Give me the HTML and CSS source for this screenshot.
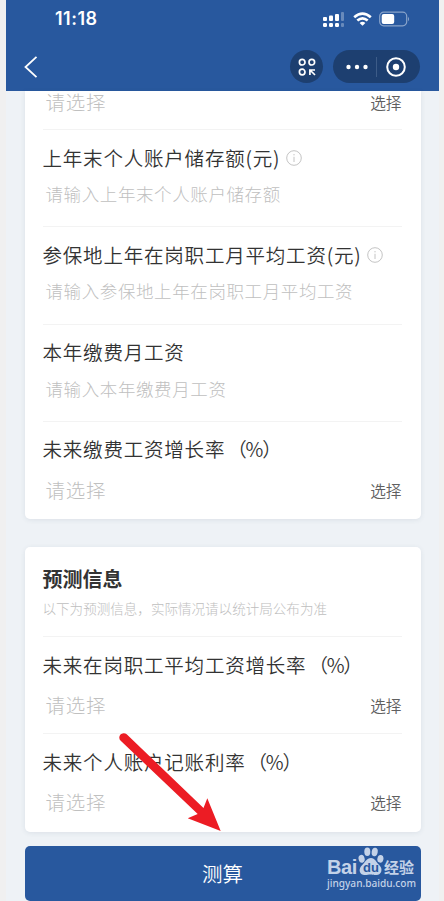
FILE: index.html
```html
<!DOCTYPE html>
<html lang="zh-CN">
<head>
    <meta charset="UTF-8">
    <meta name="viewport" content="width=device-width, initial-scale=1.0">
    <title>养老金测算</title>
    <link rel="stylesheet" href="styles.css">
</head>
<body>
    <div class="phone">
        <header class="top">
            <div class="status-bar">
                <span class="time">11:18</span>
                <div class="status-icons">
                    <svg class="signal" width="22" height="16" viewBox="0 0 22 16" fill="#fff">
                        <rect x="0" y="6" width="4" height="4" rx="1"/>
                        <rect x="6" y="4.500" width="4" height="5.500" rx="1"/>
                        <rect x="12" y="3" width="4" height="7" rx="1"/>
                        <rect x="18" y="1" width="3" height="9" rx="1" opacity=".3"/>
                        <rect x="0" y="12" width="4" height="4" rx="1.200"/>
                        <rect x="6" y="12" width="4" height="4" rx="1.200"/>
                        <rect x="12" y="12" width="4" height="4" rx="1.200"/>
                        <rect x="18" y="12" width="3" height="4" rx="1" opacity=".3"/>
                    </svg>
                    <svg class="wifi" width="19" height="14" viewBox="0 0 19 14" fill="none" stroke="#fff" stroke-width="2.700">
                        <path d="M1.200 5.200Q9.500-2 17.800 5.200"/>
                        <path d="M4.300 8.500Q9.500 4.200 14.700 8.500"/>
                        <path d="M9.500 13.800L6.600 10.900Q9.500 8.700 12.400 10.900Z" fill="#fff" stroke="none"/>
                    </svg>
                    <svg class="battery" width="32" height="16" viewBox="0 0 32 16">
                        <rect x=".7" y="1.200" width="27" height="13.600" rx="4" fill="none" stroke="#fff" stroke-opacity=".45" stroke-width="1.200"/>
                        <rect x="2.700" y="3" width="12.500" height="10" rx="2" fill="#fff"/>
                        <path d="M29 5.700Q31.200 8 29 10.300Z" fill="#fff" opacity=".45"/>
                    </svg>
                </div>
            </div>
            <div class="nav-bar">
                <svg class="back" width="14" height="22" viewBox="0 0 14 22" fill="none" stroke="#fff" stroke-width="1.800">
                    <path d="M12.500 .8L1.500 11L12.500 21.200"/>
                </svg>
                <div class="nav-actions">
                    <div class="circle-btn">
                        <svg width="18" height="18" viewBox="0 0 18 18" fill="none" stroke="#fff" stroke-width="1.700">
                            <circle cx="4.200" cy="4.200" r="2.800"/>
                            <circle cx="13.800" cy="4.200" r="2.800"/>
                            <circle cx="4.200" cy="14" r="2.800"/>
                            <path d="M11.900 17V12H17M12 12L17 17"/>
                        </svg>
                    </div>
                    <div class="capsule">
                        <svg width="22" height="6" viewBox="0 0 22 6" fill="#fff">
                            <circle cx="2.500" cy="3" r="2.200"/>
                            <circle cx="11" cy="3" r="2.200"/>
                            <circle cx="19.500" cy="3" r="2.200"/>
                        </svg>
                        <span class="split"></span>
                        <svg width="20" height="20" viewBox="0 0 20 20">
                            <circle cx="10" cy="10" r="8.800" fill="none" stroke="#fff" stroke-width="2"/>
                            <circle cx="10" cy="10" r="3.200" fill="#fff"/>
                        </svg>
                    </div>
                </div>
            </div>
        </header>

        <main class="content">
            <section class="card card-first">
                <div class="row row-cut">
                    <div class="field select"><span>请选择</span><span class="pick">选择</span></div>
                </div>
                <div class="row">
                    <div class="label">上年末个人账户储存额(元)
                        <svg class="info" width="16" height="16" viewBox="0 0 16 16"><circle cx="8" cy="8" r="7.300"/><path d="M8 6.800V12M8 4V5.400"/></svg>
                    </div>
                    <div class="field">请输入上年末个人账户储存额</div>
                </div>
                <div class="row">
                    <div class="label">参保地上年在岗职工月平均工资(元)
                        <svg class="info" width="16" height="16" viewBox="0 0 16 16"><circle cx="8" cy="8" r="7.300"/><path d="M8 6.800V12M8 4V5.400"/></svg>
                    </div>
                    <div class="field">请输入参保地上年在岗职工月平均工资</div>
                </div>
                <div class="row">
                    <div class="label">本年缴费月工资</div>
                    <div class="field">请输入本年缴费月工资</div>
                </div>
                <div class="row">
                    <div class="label">未来缴费工资增长率<span class="unit">（%）</span></div>
                    <div class="field select"><span>请选择</span><span class="pick">选择</span></div>
                </div>
            </section>

            <section class="card card-forecast">
                <div class="card-head">
                    <h2>预测信息</h2>
                    <p>以下为预测信息，实际情况请以统计局公布为准</p>
                </div>
                <div class="row">
                    <div class="label">未来在岗职工平均工资增长率<span class="unit">（%）</span></div>
                    <div class="field select"><span>请选择</span><span class="pick">选择</span></div>
                </div>
                <div class="row">
                    <div class="label">未来个人账户记账利率<span class="unit">（%）</span></div>
                    <div class="field select"><span>请选择</span><span class="pick">选择</span></div>
                </div>
            </section>

            <button class="submit" type="button">测算</button>
        </main>

        <svg class="arrow" width="112" height="100" viewBox="0 0 112 100">
            <path d="M8.700 7.800A4.400 4.400 0 0 1 14.700 1.300L91.500 75L95.300 65.300L108.700 98L75.700 85.300L85.700 81Z" fill="#ec1c24"/>
        </svg>

        <div class="watermark">
            <div class="wm-logo">
                <span class="wm-bai">Bai</span>
                <span class="wm-paw">
                    <svg width="26" height="29" viewBox="0 0 26 29" fill="currentColor">
                        <ellipse cx="3.600" cy="11.800" rx="3" ry="4" transform="rotate(-15 3.600 11.800)"/>
                        <ellipse cx="9.300" cy="4.800" rx="3" ry="4.200"/>
                        <ellipse cx="16.700" cy="5" rx="3" ry="4.200" transform="rotate(10 16.700 5)"/>
                        <ellipse cx="22.400" cy="11.800" rx="3" ry="3.900" transform="rotate(12 22.400 11.800)"/>
                        <path d="M13 11C17 11 18 15 21 17.800C25.500 22 23.500 28 18.500 28C15 28 15 27.500 12.500 27.500S8 28.500 5 27.800C1 26.500 .5 21.500 4 18.200C7.500 15 8.500 11 13 11Z"/>
                    </svg>
                    <b>du</b>
                </span>
                <span class="wm-cn">经验</span>
            </div>
            <div class="wm-url">jingyan.baidu.com</div>
        </div>
    </div>
</body>
</html>
```
FILE: styles.css
```css
* {
    box-sizing: border-box;
}

body {
    margin: 0;
    background-color: #f0f0f0;
    font-family: "Noto Sans CJK SC", sans-serif;
    font-weight: 350;
    color: #333;
    overflow: hidden;
}

.phone {
    position: relative;
    width: 433px;
    height: 901px;
    margin-left: 6px;
    background-color: #eef2f6;
    overflow: hidden;
}

svg {
    display: block;
    flex: none;
}

/* header */
.top {
    height: 91px;
    background-color: #28589e;
    color: #fff;
}

.status-bar {
    display: flex;
    justify-content: space-between;
    height: 38px;
    padding: 0 28px 0 49px;
}

.time {
    font: 600 18px/38px Inter, sans-serif;
    letter-spacing: 0.5px;
}

.status-icons {
    display: flex;
    align-items: center;
}

.wifi {
    margin: 0 7px 0 8px;
}

.nav-bar {
    display: flex;
    justify-content: space-between;
    align-items: center;
    height: 57px;
    padding: 0 19px 0 18px;
}

.nav-actions {
    display: flex;
    gap: 10px;
}

.circle-btn {
    display: flex;
    align-items: center;
    justify-content: center;
    width: 33px;
    height: 33px;
    border-radius: 50%;
    background-color: #1d3f70;
}

.capsule {
    display: flex;
    align-items: center;
    width: 87px;
    height: 33px;
    padding-left: 13px;
    border-radius: 17px;
    background-color: #1d3f70;
}

.split {
    width: 1px;
    height: 20px;
    margin: 0 9px 0 8px;
    background-color: #3d5c88;
}

/* cards */
.content {
    padding: 0 18.5px;
}

.card {
    padding: 0 19px 0 18px;
    border-radius: 5px;
    background-color: #fff;
    box-shadow: 0 1px 5px rgba(60, 80, 110, 0.1);
}

.card-first {
    height: 428px;
    border-radius: 0 0 5px 5px;
}

.card-forecast {
    height: 285px;
    margin-top: 28px;
}

.card-head {
    height: 89px;
    padding-top: 18px;
}

.card-head h2 {
    margin: 0;
    font-size: 20px;
    line-height: 28px;
    font-weight: 700;
}

.card-head p {
    margin: 5px 0 0;
    color: #bebebe;
    font-size: 13.55px;
    font-weight: 300;
    line-height: 20px;
    white-space: nowrap;
}

.row {
    height: 97.25px;
    padding-top: 13px;
    border-top: 1px solid #f3f3f3;
}

.row-cut {
    display: flex;
    align-items: flex-end;
    height: 38px;
    padding: 0 0 13px;
    border: none;
}

.row-cut .select {
    flex: 1;
}

.label {
    display: flex;
    align-items: center;
    height: 28px;
    font-size: 19.5px;
    letter-spacing: 0.8px;
    white-space: nowrap;
}

/* full-width brackets set a little tighter around the percent sign */
.unit {
    margin-left: 2px;
    letter-spacing: -1.2px;
}

.info {
    margin: 1px 0 0 5.5px;
    fill: none;
    stroke: #c4c4c4;
    stroke-width: 1;
}

.field {
    height: 28px;
    margin-top: 9px;
    padding-left: 3px;
    color: #c0c0c0;
    font-size: 17.5px;
    font-weight: 300;
    line-height: 28px;
    letter-spacing: 0.6px;
    white-space: nowrap;
}

.select {
    display: flex;
    justify-content: space-between;
    margin-top: 13px;
    font-size: 19.5px;
    letter-spacing: 0.75px;
}

.pick {
    color: #606060;
    font-size: 15.7px;
    font-weight: 350;
    line-height: 30px;
    letter-spacing: 0;
}

.submit {
    display: block;
    width: 100%;
    height: 55px;
    margin-top: 14px;
    padding: 0;
    border: none;
    border-radius: 5px;
    background-color: #28589e;
    color: #fff;
    font: 350 20.5px/55px "Noto Sans CJK SC", sans-serif;
}

/* pointer drawn over the form */
.arrow {
    position: absolute;
    left: 106px;
    top: 733px;
}

.watermark {
    position: absolute;
    left: 321px;
    top: 847px;
    width: 92px;
    color: #c3d2e8;
    font-family: "Noto Sans", sans-serif;
}

.wm-logo {
    display: flex;
    height: 29px;
}

.wm-bai {
    width: 31px;
    font: 700 20px/40px "Liberation Sans", sans-serif;
    letter-spacing: -0.4px;
}

.wm-paw {
    position: relative;
    width: 26px;
}

.wm-paw b {
    position: absolute;
    left: 5px;
    top: 14px;
    color: #28589e;
    font: 700 13px/14px "Liberation Sans", sans-serif;
}

.wm-cn {
    font: 700 15px/40px "Noto Sans CJK SC", sans-serif;
}

.wm-url {
    font-size: 10.1px;
    font-weight: 500;
    line-height: 14px;
}
```
